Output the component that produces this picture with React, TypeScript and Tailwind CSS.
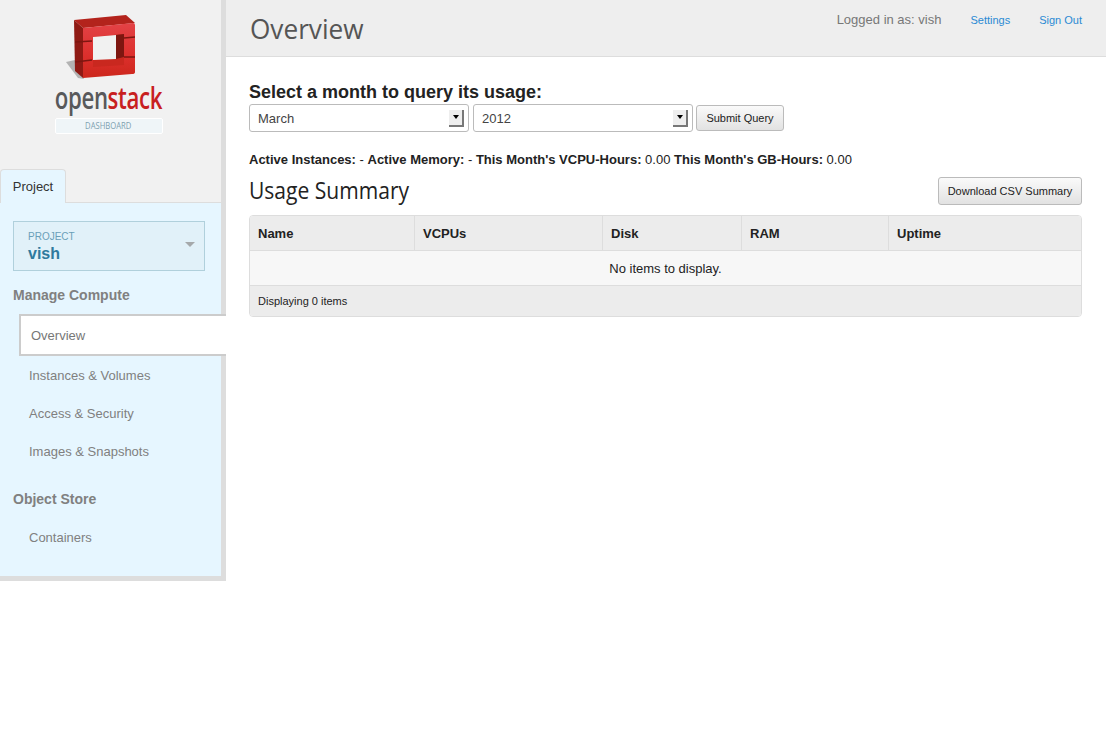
const sans = "font-['Liberation_Sans',Arial,sans-serif]";

function Logo() {
  return (
    <svg width="80" height="72" viewBox="60 10 80 72" className="block">
      <defs>
        <linearGradient id="face" x1="0" y1="0" x2="0" y2="1">
          <stop offset="0" stopColor="#e34246" />
          <stop offset="0.6" stopColor="#dc2f2c" />
          <stop offset="1" stopColor="#cc271c" />
        </linearGradient>
      </defs>
      <path d="M66 62 L75 60 L84 79 L78 78 Z" fill="#8a8a8a" opacity="0.6" />
      <path d="M74 20 L126 15 L135 23 L83 28 Z" fill="#b3231c" />
      <path d="M74 20 L83 28 L83 78 L75 71 Z" fill="#8f1a14" />
      <path d="M83 28 L133 23 Q135 23 135 25 L135 72 Q135 74 132 74 L83 78 Z" fill="url(#face)" />
      <path d="M93 37 L124 34 L124 65 L93 67 Z" fill="#c9281f" />
      <path d="M93 37 L116 35 L116 59 L93 60 Z" fill="#f1f1f1" />
      <path d="M116 35 L124 34 L124 57 L116 59 Z" fill="#7d1610" />
      <path d="M75 42 L92 41 M75 62 L92 60 M124 38 L135 37 M124 57 L135 57" stroke="#7d1610" strokeWidth="1.3" fill="none" />
    </svg>
  );
}

function NavItem({ label }: { label: string }) {
  return (
    <div className="h-[38px] pl-[29px] flex items-center text-[13px] text-[#808080]">{label}</div>
  );
}

function FakeSelect({ label, width }: { label: string; width: string }) {
  return (
    <div className={`${width} h-[28px] border border-[#bbb] rounded-[3px] bg-white flex items-center justify-between pl-2 pr-[4px] text-[13px] text-[#444]`}>
      <span className="pt-px">{label}</span>
      <span className="w-[15px] h-[17px] bg-[#eee] border-r-2 border-b-2 border-[#777] flex items-center justify-center">
        <span className="w-0 h-0 border-x-[3px] border-x-transparent border-t-[4px] border-t-black" />
      </span>
    </div>
  );
}

function HeadCell({ label, width }: { label: string; width: string }) {
  return (
    <div className={`${width} h-full pl-2 pt-[2px] flex items-center border-r border-[#ddd] last:border-r-0 text-[13px] font-bold text-[#222]`}>
      {label}
    </div>
  );
}

export default function App() {
  return (
    <div className={`${sans} flex items-start w-full min-h-screen bg-white`}>
      {/* Sidebar */}
      <aside className="w-[226px] h-[581px] shrink-0 border-r-[5px] border-b-[5px] border-[#ddd] bg-[#f1f1f1] flex flex-col">
        <div className="h-[169px] shrink-0 flex flex-col items-center pt-[10px] pr-[3px]">
          <div className="mr-[19px]">
            <Logo />
          </div>
          <div className="mt-[-1px] ml-[-1px] text-[30px] leading-[34px] tracking-[-0.5px] font-semibold font-['Open_Sans',sans-serif] scale-x-[0.74]">
            <span className="text-[#58595b]">open</span>
            <span className="text-[#c8201f]">stack</span>
          </div>
          <div className="mt-[3px] w-[108px] h-[16px] ml-[-1px] bg-[#eff5f8] border border-white rounded-[2px] flex items-center justify-center text-[9px] text-[#7d9fb0] font-['Open_Sans',sans-serif]">
            <span className="scale-x-[0.85]">DASHBOARD</span>
          </div>
        </div>
        <div className="h-[34px] shrink-0 border-b border-[#ddd] relative">
          <div className="absolute left-0 top-0 w-[66px] h-[34px] bg-[#e6f6ff] border border-b-0 border-[#ddd] rounded-t-[4px] flex items-center justify-center text-[13px] text-[#333]">
            Project
          </div>
        </div>
        <div className="flex-1 bg-[#e6f6ff] flex flex-col">
          <div className="mt-[18px] mx-[13px] w-[192px] h-[50px] shrink-0 bg-[#e1f1f9] border border-[#b0d0dc] pl-[14px] pt-[9px] relative">
            <div className="text-[10px] leading-[12px] text-[#6a9fb8]">PROJECT</div>
            <div className="text-[16px] leading-[22px] font-bold text-[#2f7a9e]">vish</div>
            <span className="absolute right-[9px] top-[20px] w-0 h-0 border-x-[5px] border-x-transparent border-t-[5px] border-t-[#a5a9ab]" />
          </div>
          <div className="mt-[14px] pl-[13px] text-[14px] leading-[20px] font-bold text-[#808080]">Manage Compute</div>
          <div className="mt-[9px] ml-[19px] w-[207px] h-[42px] shrink-0 bg-white border-[2px] border-r-0 border-[#ccc] pl-[10px] pt-[2px] flex items-center text-[13px] text-[#777] relative z-10">
            Overview
          </div>
          <div className="mt-[1px]">
            <NavItem label="Instances & Volumes" />
            <NavItem label="Access & Security" />
            <NavItem label="Images & Snapshots" />
          </div>
          <div className="mt-[18px] pl-[13px] text-[14px] leading-[20px] font-bold text-[#808080]">Object Store</div>
          <div className="mt-[10px]">
            <NavItem label="Containers" />
          </div>
        </div>
      </aside>

      {/* Main */}
      <main className="flex-1 min-w-0">
        <header className="h-[57px] bg-[#eee] border-b border-[#ddd] flex items-start justify-between pl-6 pr-6">
          <h1 className="mt-[11px] text-[27px] leading-[36px] font-medium text-[#555] font-['Open_Sans',sans-serif] scale-x-[0.97] origin-left">Overview</h1>
          <div className="flex items-center mt-[12px] h-[16px]">
            <span className="text-[13px] text-[#777] mr-[29px]">Logged in as: vish</span>
            <a className="text-[11px] text-[#2a8ad4] mr-[29px]">Settings</a>
            <a className="text-[11px] text-[#2a8ad4]">Sign Out</a>
          </div>
        </header>

        <div className="pl-[23px] pr-6">
          <h3 className="mt-[25px] text-[18px] leading-[20px] font-bold text-[#222]">Select a month to query its usage:</h3>
          <div className="mt-[2px] flex items-center">
            <FakeSelect label="March" width="w-[220px] mr-1" />
            <FakeSelect label="2012" width="w-[220px] mr-[3px]" />
            <button className="w-[88px] h-[26px] border border-[#bbb] rounded-[3px] bg-gradient-to-b from-[#fafafa] to-[#e2e2e2] text-[11px] text-[#222]">
              Submit Query
            </button>
          </div>
          <p className="mt-[20px] text-[13px] leading-[16px] text-[#222]">
            <b>Active Instances:</b> - <b>Active Memory:</b> - <b>This Month's VCPU-Hours:</b> 0.00 <b>This Month's GB-Hours:</b> 0.00
          </p>
          <div className="mt-[6px] h-[34px] flex items-center justify-between">
            <h2 className="mb-[2px] text-[23px] leading-[30px] text-[#222] font-['Open_Sans',sans-serif] scale-x-[0.915] origin-left">Usage Summary</h2>
            <button className="w-[144px] h-[28px] border border-[#bbb] rounded-[3px] bg-gradient-to-b from-[#fafafa] to-[#e2e2e2] text-[11px] text-[#222]">
              Download CSV Summary
            </button>
          </div>
          <div className="mt-[7px] border border-[#ddd] rounded-[4px] overflow-hidden">
            <div className="h-[35px] bg-[#ececec] border-b border-[#ddd] flex">
              <HeadCell label="Name" width="w-[165px]" />
              <HeadCell label="VCPUs" width="w-[188px]" />
              <HeadCell label="Disk" width="w-[139px]" />
              <HeadCell label="RAM" width="w-[147px]" />
              <HeadCell label="Uptime" width="flex-1" />
            </div>
            <div className="h-[35px] pt-[2px] bg-[#f7f7f7] border-b border-[#ddd] flex items-center justify-center text-[13px] text-[#222]">
              No items to display.
            </div>
            <div className="h-[30px] bg-[#ececec] pl-2 flex items-center text-[11px] text-[#222]">Displaying 0 items</div>
          </div>
        </div>
      </main>
    </div>
  );
}
